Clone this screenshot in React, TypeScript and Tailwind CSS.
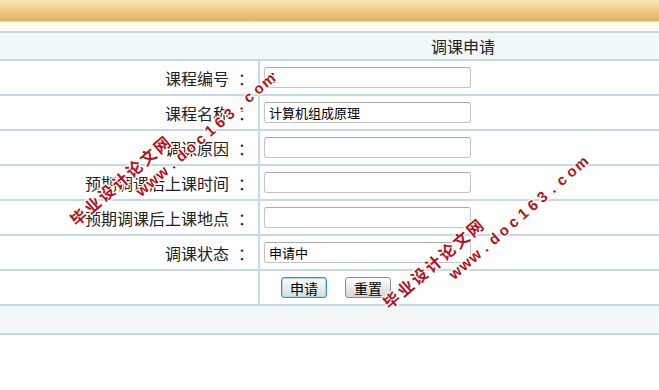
import React from 'react';

const ROWS: { label: string; value: string }[] = [
  { label: '课程编号', value: '1' },
  { label: '课程名称', value: '计算机组成原理' },
  { label: '调课原因', value: '' },
  { label: '预期调课后上课时间', value: '' },
  { label: '预期调课后上课地点', value: '' },
  { label: '调课状态', value: '申请中' },
];

const CJK = "font-['Noto_Sans_CJK_SC','Noto_Sans',sans-serif]";

const Watermark: React.FC<{ left: number; top: number }> = ({ left, top }) => (
  <div
    className="pointer-events-none absolute origin-top-left -rotate-[41deg] text-[#b3121a] [text-shadow:1px_0_0_#fff,-1px_0_0_#fff,0_1px_0_#fff,0_-1px_0_#fff,1px_1px_0_#fff,-1px_-1px_0_#fff,1px_-1px_0_#fff,-1px_1px_0_#fff]"
    style={{ left, top }}
  >
    <div className={`flex h-[18px] text-[16px] leading-[18px] font-bold ${CJK}`}>
      {'毕业设计论文网'.split('').map((ch, i) => (
        <span key={i} className="inline-block w-[18.4px] text-left">
          {ch}
        </span>
      ))}
    </div>
    <div className="ml-[68px] mt-[5px] flex h-[16px] text-[15px] leading-[16px] font-bold font-['Liberation_Sans',Arial,sans-serif]">
      {'www.doc163.com'.split('').map((ch, i) => (
        <span key={i} className="inline-block w-[12.8px] text-center">
          {ch}
        </span>
      ))}
    </div>
  </div>
);

const App: React.FC = () => {
  return (
    <div className={`relative h-[390px] w-[659px] overflow-hidden bg-white text-[#222] ${CJK}`}>
      <div className="h-[22px] border-b border-[#f3dca4] bg-gradient-to-b from-[#f8e6b3] to-[#e0b262]" />
      <div className="h-[9px] bg-[#fffdf2]" />

      <div className="border-t-2 border-[#c6d7e4]">
        <div className="flex h-[28px] items-center justify-center border-b-2 border-[#c6d7e4] bg-[#f2f7f7] pl-[267px] text-[16px]">
          调课申请
        </div>

        {ROWS.map(row => (
          <div key={row.label} className="flex h-[35px] border-b-2 border-[#c6d9eb]">
            <div className="flex w-[260px] items-center justify-end border-r-2 border-[#c6d9eb] pr-[4px] text-[16px]">
              <span>{row.label}</span>
              <span className="ml-[9px] w-[16px]">：</span>
            </div>
            <div className="flex flex-1 items-center pl-[4px]">
              <input
                readOnly
                value={row.value}
                className="h-[21px] w-[207px] rounded-[3px] border border-[#c4c4c4] border-t-[#a9a9a9] bg-white px-[4px] text-[13px] text-black outline-none"
              />
            </div>
          </div>
        ))}

        <div className="flex h-[35px] border-b-2 border-[#c6d9eb]">
          <div className="w-[260px] border-r-2 border-[#c6d9eb]" />
          <div className="flex flex-1 items-center gap-[18px] pl-[21px]">
            <button className="h-[21px] w-[46px] rounded-[3px] border border-[#3f8ebd] bg-gradient-to-b from-[#fdfdfd] to-[#d9dde0] text-[14px] leading-none text-black shadow-[inset_0_0_0_1px_#a9d6ef]">
              申请
            </button>
            <button className="h-[21px] w-[46px] rounded-[3px] border border-[#8c8c8c] bg-gradient-to-b from-[#fdfdfd] to-[#d6d6d6] text-[14px] leading-none text-black">
              重置
            </button>
          </div>
        </div>

        <div className="h-[29px] border-b-2 border-[#c6d9eb] bg-[#f2f7f7]" />
      </div>

      <Watermark left={66} top={215} />
      <Watermark left={379} top={298} />
    </div>
  );
};

export default App;
